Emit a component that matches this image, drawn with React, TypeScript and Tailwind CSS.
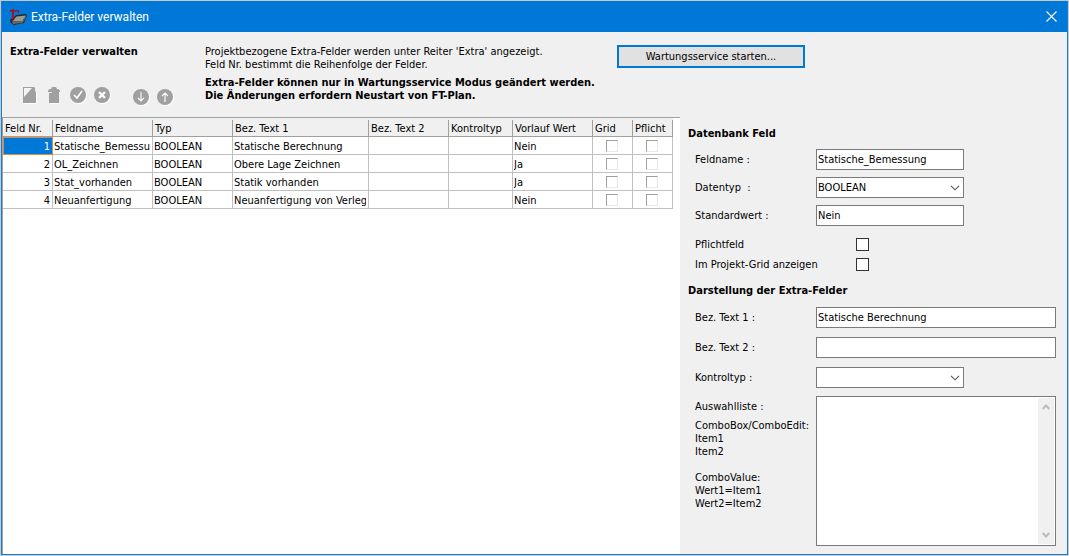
import type { ReactNode } from "react";

type Row = { nr: number; name: string; text1: string; vorlauf: string };

const rows: Row[] = [
  { nr: 1, name: "Statische_Bemessung", text1: "Statische Berechnung", vorlauf: "Nein" },
  { nr: 2, name: "OL_Zeichnen", text1: "Obere Lage Zeichnen", vorlauf: "Ja" },
  { nr: 3, name: "Stat_vorhanden", text1: "Statik vorhanden", vorlauf: "Ja" },
  { nr: 4, name: "Neuanfertigung", text1: "Neuanfertigung von Verlegeplan", vorlauf: "Nein" },
];

const columns = [
  { label: "Feld Nr.", width: "w-[50px]" },
  { label: "Feldname", width: "w-[100px]" },
  { label: "Typ", width: "w-[80px]" },
  { label: "Bez. Text 1", width: "w-[136px]" },
  { label: "Bez. Text 2", width: "w-[80px]" },
  { label: "Kontroltyp", width: "w-[64px]" },
  { label: "Vorlauf Wert", width: "w-[80px]" },
  { label: "Grid", width: "w-[40px]" },
  { label: "Pflicht", width: "w-[40px]" },
];

const cell = "h-[18px] border-r border-b border-[#c0c0c0] p-0 pr-0.5 pl-px";
const cellText = "overflow-hidden whitespace-nowrap pt-px";
const field = "h-[21px] border border-[#7a7a7a] bg-white px-px text-[11px] leading-[13px] text-black outline-none";

function AppIcon() {
  return (
    <svg width="18" height="18" viewBox="0 0 18 18" aria-hidden="true">
      <path d="m1 12 3-2 3-3 10-1 1 2-3 7-10 2-3-2z" fill="#2b2524" />
      <path d="m3 13.500 4.500-5L17 7.500 13.500 13z" fill="#969c96" />
      <path d="m3 13.500 10.500-.5L17 7.800V9.500L13.500 15 4 16z" fill="#656b68" />
      <path d="M1 2h2V1h2v1h5v3H9V3.500H5V11H3V4H1z" fill="#a0152c" />
      <path d="m1.500 11 3-1 1 1.500-3 2z" fill="#6b1826" />
    </svg>
  );
}

function ToolButton({ label, children }: { label: string; children: ReactNode }) {
  return (
    <button type="button" disabled aria-label={label} className="size-[18px]">
      <svg width="18" height="18" viewBox="0 0 18 18" aria-hidden="true">
        {children}
      </svg>
    </button>
  );
}

function Disc({ children }: { children: ReactNode }) {
  return (
    <>
      <circle cx="10" cy="10" r="8" fill="#fff" />
      <circle cx="9" cy="9" r="8" fill="#a0a0a0" />
      <g fill="none" stroke="#fff">{children}</g>
    </>
  );
}

function Drop({ id, value }: { id: string; value: string }) {
  return (
    <div className="relative w-[148px]">
      <select id={id} defaultValue={value} className={`${field} block w-full appearance-none`}>
        <option value={value}>{value}</option>
      </select>
      <svg className="pointer-events-none absolute top-2 right-1" width="10" height="6" viewBox="0 0 10 6" aria-hidden="true">
        <path d="m1 .8 4 4 4-4" fill="none" stroke="#555" strokeWidth="1.1" />
      </svg>
    </div>
  );
}

function FormRow({ id, label, children }: { id: string; label: string; children: ReactNode }) {
  return (
    <div className="flex items-center">
      <label htmlFor={id} className="w-[121px] shrink-0 whitespace-pre">{label}</label>
      {children}
    </div>
  );
}

export default function App() {
  return (
    <div className="flex min-h-screen flex-col bg-[#c8c8c8] p-px font-['DejaVu_Sans_Condensed','DejaVu_Sans',sans-serif] text-[11px] leading-[13px] text-black">
      <div className="flex flex-1 flex-col border border-t-0 border-[#1a7fd4] bg-[#f0f0f0]">
        <header className="flex h-[31px] items-center bg-[#0078d7] pl-[7px] text-white">
          <AppIcon />
          <h1 className="ml-1 flex-1 font-[Roboto,sans-serif] text-[12px] leading-4">Extra-Felder verwalten</h1>
          <button type="button" aria-label="Schließen" className="flex h-full w-[31px] items-center justify-center">
            <svg width="11" height="11" viewBox="0 0 11 11" aria-hidden="true">
              <path d="m.5.5 10 10m0-10-10 10" stroke="#fff" strokeWidth="1.1" />
            </svg>
          </button>
        </header>

        <section className="flex h-[85px]">
          <div className="w-[203px] shrink-0 pt-[13px] pl-2">
            <h2 className="font-bold">Extra-Felder verwalten</h2>
            <div className="mt-7 flex gap-[6px] pl-[11px]">
              <ToolButton label="Neu">
                <path d="M3 2h11v3l2 2v11H3z" fill="#fff" />
                <path d="M2 1h11l1 1v3l1 1v11H2z" fill="#a0a0a0" />
                <path d="M3 2h8l-8 9z" fill="#f4f4f4" />
              </ToolButton>
              <ToolButton label="Löschen">
                <path d="M4 5l3-3h5l3 2v3h-1v11H5V7H4z" fill="#fff" />
                <path d="M3 4.500 4.500 3H6l1-2h4l1 2h1.500L15 4.500V6h-1v11H4V6H3z" fill="#a0a0a0" />
                <path d="M4 6.500h3" stroke="#e8e8e8" />
              </ToolButton>
              <ToolButton label="Übernehmen">
                <Disc><path d="m5 9 3 3 5-7" strokeWidth="1.6" /></Disc>
              </ToolButton>
              <ToolButton label="Abbrechen">
                <Disc><path d="m6 6 6 6m0-6-6 6" strokeWidth="2.4" /></Disc>
              </ToolButton>
              <div className="flex gap-[6px] pt-0.5 pl-[15px]">
                <ToolButton label="Nach unten">
                  <Disc><path d="M9 4v9M6 10l3 3 3-3" strokeWidth="1.1" /></Disc>
                </ToolButton>
                <ToolButton label="Nach oben">
                  <Disc><path d="M9 14V5M6 8l3-3 3 3" strokeWidth="1.1" /></Disc>
                </ToolButton>
              </div>
            </div>
          </div>
          <div className="w-[412px] shrink-0 whitespace-nowrap pt-[13px]">
            <p>Projektbezogene Extra-Felder werden unter Reiter 'Extra' angezeigt.<br />Feld Nr. bestimmt die Reihenfolge der Felder.</p>
            <p className="mt-[5px] font-bold">Extra-Felder können nur in Wartungsservice Modus geändert werden.<br />Die Änderungen erfordern Neustart von FT-Plan.</p>
          </div>
          <div className="pt-[13px]">
            <button type="button" className="h-[23px] w-[188px] border-2 border-[#0078d7] bg-[#e1e1e1]">Wartungsservice starten...</button>
          </div>
        </section>

        <main className="flex flex-1">
          <section className="min-w-0 flex-1 border-t border-l border-[#a0a0a0] bg-white">
            <table className="w-[670px] table-fixed border-separate border-spacing-0">
              <thead>
                <tr>
                  {columns.map((c) => (
                    <th key={c.label} className={`${c.width} h-[19px] border-b border-[#a0a0a0] bg-[#f0f0f0] p-0 pt-px text-left font-normal whitespace-nowrap`}>
                      <div className="h-4 border-r border-[#a0a0a0] pt-0.5 pl-0.5">{c.label}</div>
                    </th>
                  ))}
                </tr>
              </thead>
              <tbody>
                {rows.map((r, i) => (
                  <tr key={r.nr}>
                    <td className={`${cell} text-right ${i === 0 ? "bg-[#0078d7] text-white outline outline-1 -outline-offset-1 outline-[#e08a45]" : ""}`}>
                      <div className={cellText}>{r.nr}</div>
                    </td>
                    <td className={cell}><div className={cellText}>{r.name}</div></td>
                    <td className={cell}><div className={cellText}>BOOLEAN</div></td>
                    <td className={cell}><div className={cellText}>{r.text1}</div></td>
                    <td className={cell}></td>
                    <td className={cell}></td>
                    <td className={cell}><div className={cellText}>{r.vorlauf}</div></td>
                    {["Grid", "Pflicht"].map((n) => (
                      <td key={n} className={cell}>
                        <input type="checkbox" aria-label={`${n} ${r.name}`} className="mx-auto block size-3 appearance-none border border-t-[#a0a0a0] border-r-[#e8e8e8] border-b-[#e8e8e8] border-l-[#a0a0a0] bg-white" />
                      </td>
                    ))}
                  </tr>
                ))}
              </tbody>
            </table>
          </section>

          <form className="w-[387px] shrink-0 pt-[10px] pr-[11px] pb-2 pl-2">
            <h2 className="font-bold">Datenbank Feld</h2>
            <div className="mt-[9px] flex flex-col gap-[7px] pl-[7px]">
              <FormRow id="feldname" label="Feldname :">
                <input id="feldname" defaultValue="Statische_Bemessung" className={`${field} w-[148px]`} />
              </FormRow>
              <FormRow id="datentyp" label="Datentyp  :">
                <Drop id="datentyp" value="BOOLEAN" />
              </FormRow>
              <FormRow id="standardwert" label="Standardwert :">
                <input id="standardwert" defaultValue="Nein" className={`${field} w-[148px]`} />
              </FormRow>
            </div>
            <div className="mt-3 flex flex-col gap-[7px] pl-[7px]">
              <FormRow id="pflichtfeld" label="Pflichtfeld">
                <input id="pflichtfeld" type="checkbox" className="ml-10 size-[13px] appearance-none border border-[#333] bg-white" />
              </FormRow>
              <FormRow id="projektgrid" label="Im Projekt-Grid anzeigen">
                <input id="projektgrid" type="checkbox" className="ml-10 size-[13px] appearance-none border border-[#333] bg-white" />
              </FormRow>
            </div>
            <h2 className="mt-[13px] font-bold">Darstellung der Extra-Felder</h2>
            <div className="mt-[10px] flex flex-col gap-[9px] pl-[7px]">
              <FormRow id="text1" label="Bez. Text 1 :">
                <input id="text1" defaultValue="Statische Berechnung" className={`${field} min-w-0 flex-1`} />
              </FormRow>
              <FormRow id="text2" label="Bez. Text 2 :">
                <input id="text2" className={`${field} min-w-0 flex-1`} />
              </FormRow>
              <FormRow id="kontroltyp" label="Kontroltyp :">
                <Drop id="kontroltyp" value="" />
              </FormRow>
            </div>
            <div className="mt-2 flex pl-[7px]">
              <div className="w-[121px] shrink-0 pt-1">
                <label htmlFor="auswahl">Auswahlliste :</label>
                <p className="mt-[6px] whitespace-pre">{"ComboBox/ComboEdit:\nItem1\nItem2\n\nComboValue:\nWert1=Item1\nWert2=Item2"}</p>
              </div>
              <div className="flex h-[150px] min-w-0 flex-1 border border-[#7a7a7a] bg-white p-px">
                <textarea id="auswahl" className="block min-w-0 flex-1 resize-none outline-none" />
                <div className="flex w-4 flex-col items-center justify-between bg-[#f0f0f0] py-[6px]">
                  <svg width="8" height="6" viewBox="0 0 8 6" aria-hidden="true"><path d="M.7 5 4 1.500 7.300 5" fill="none" stroke="#bbb" strokeWidth="2" /></svg>
                  <svg width="8" height="6" viewBox="0 0 8 6" aria-hidden="true"><path d="M.7 1 4 4.500 7.300 1" fill="none" stroke="#bbb" strokeWidth="2" /></svg>
                </div>
              </div>
            </div>
          </form>
        </main>
      </div>
    </div>
  );
}
